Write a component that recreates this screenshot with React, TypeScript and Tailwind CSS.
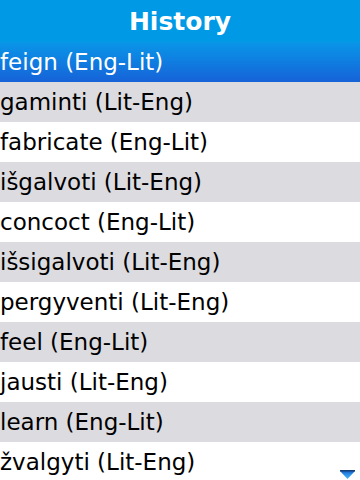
import React from "react";

const items = [
  "feign (Eng-Lit)",
  "gaminti (Lit-Eng)",
  "fabricate (Eng-Lit)",
  "išgalvoti (Lit-Eng)",
  "concoct (Eng-Lit)",
  "išsigalvoti (Lit-Eng)",
  "pergyventi (Lit-Eng)",
  "feel (Eng-Lit)",
  "jausti (Lit-Eng)",
  "learn (Eng-Lit)",
  "žvalgyti (Lit-Eng)",
];

export default function App() {
  return (
    <div
      className="w-[360px] h-[480px] overflow-hidden bg-white relative"
      style={{ fontFamily: '"DejaVu Sans", sans-serif' }}
    >
      <div className="h-[42px] bg-[#0099e5] flex items-center justify-center text-white font-bold text-[25px] leading-none">
        History
      </div>
      {items.map((t, i) => (
        <div
          key={i}
          className={
            "h-[40px] flex items-center pl-[0px] text-[23px] leading-none " +
            (i === 0
              ? "bg-gradient-to-b from-[#0a96e8] to-[#1762d8] text-white"
              : i % 2 === 1
              ? "bg-[#dcdbdf] text-black"
              : "bg-white text-black")
          }
        >
          {t}
        </div>
      ))}
      <svg
        className="absolute left-[340px] top-[470px]"
        width="15"
        height="9"
        viewBox="0 0 15 9"
      >
        <defs>
          <linearGradient id="ag" x1="0" y1="0" x2="0" y2="1">
            <stop offset="0" stopColor="#1a5fc0" />
            <stop offset="0.4" stopColor="#2a8fe8" />
            <stop offset="1" stopColor="#48b4f8" />
          </linearGradient>
        </defs>
        <polygon points="0,1 15,1 7.5,9" fill="url(#ag)" />
        <rect x="0" y="0" width="15" height="1.5" fill="#14407a" />
      </svg>
    </div>
  );
}
